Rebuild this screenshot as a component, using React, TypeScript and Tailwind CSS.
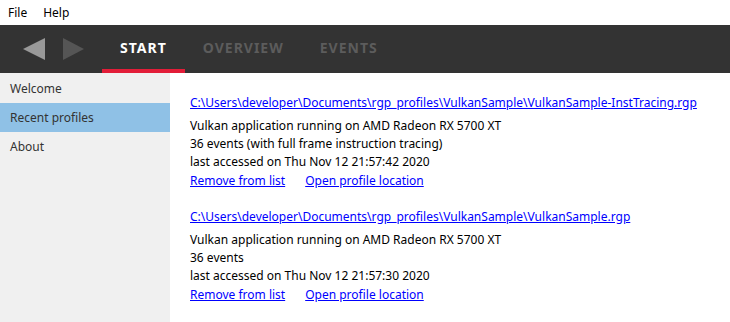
import React from "react";

const font = { fontFamily: '"Noto Sans", "Open Sans", sans-serif' };

type Profile = {
  path: string;
  device: string;
  events: string;
  accessed: string;
};

const profiles: Profile[] = [
  {
    path: "C:\\Users\\developer\\Documents\\rgp_profiles\\VulkanSample\\VulkanSample-InstTracing.rgp",
    device: "Vulkan application running on AMD Radeon RX 5700 XT",
    events: "36 events (with full frame instruction tracing)",
    accessed: "last accessed on Thu Nov 12 21:57:42 2020",
  },
  {
    path: "C:\\Users\\developer\\Documents\\rgp_profiles\\VulkanSample\\VulkanSample.rgp",
    device: "Vulkan application running on AMD Radeon RX 5700 XT",
    events: "36 events",
    accessed: "last accessed on Thu Nov 12 21:57:30 2020",
  },
];

// 최근 프로필 한 개
const ProfileEntry = ({ profile }: { profile: Profile }) => (
  <div className="flex flex-col mb-[17px]">
    <a className="text-[#0000ff] underline leading-[17px] mb-[6px] cursor-pointer">
      {profile.path}
    </a>
    <div className="text-black leading-[18px]">{profile.device}</div>
    <div className="text-black leading-[18px]">{profile.events}</div>
    <div className="text-black leading-[18px]">{profile.accessed}</div>
    <div className="flex gap-[20px] leading-[20px]">
      <a className="text-[#0000ff] underline cursor-pointer">Remove from list</a>
      <a className="text-[#0000ff] underline cursor-pointer">Open profile location</a>
    </div>
  </div>
);

export default function App() {
  const sideItems = ["Welcome", "Recent profiles", "About"];
  const tabs = ["START", "OVERVIEW", "EVENTS"];

  return (
    <div className="w-[730px] h-[322px] flex flex-col bg-white overflow-hidden text-[12px]" style={font}>
      {/* 메뉴 바 */}
      <div className="h-[25px] flex items-center gap-[16px] px-[8px] text-black">
        <span>File</span>
        <span>Help</span>
      </div>

      {/* 상단 탭 바 */}
      <div className="h-[48px] bg-[#333333] flex items-stretch">
        <div className="flex items-center gap-[18px] pl-[23px] w-[102px]">
          <svg width="22" height="22" viewBox="0 0 22 22">
            <polygon points="22,0 22,22 0,11" fill="#999999" />
          </svg>
          <svg width="21" height="22" viewBox="0 0 21 22">
            <polygon points="0,0 0,22 21,11" fill="#555555" />
          </svg>
        </div>
        {tabs.map((t, i) => (
          <div
            key={t}
            className={`flex items-center justify-center text-[14px] font-bold tracking-[1px] px-[18px] border-b-[4px] ${
              i === 0 ? "text-white border-[#e21d38]" : "text-[#5c5c5c] border-transparent"
            }`}
          >
            {t}
          </div>
        ))}
      </div>

      <div className="flex flex-1">
        {/* 사이드바 */}
        <div className="w-[170px] bg-[#f0f0f0] flex flex-col pt-[1px]">
          {sideItems.map((s) => (
            <div
              key={s}
              className={`h-[29px] flex items-center pl-[10px] text-[#333333] ${
                s === "Recent profiles" ? "bg-[#8fc1e6]" : ""
              }`}
            >
              {s}
            </div>
          ))}
        </div>

        {/* 본문 */}
        <div className="flex-1 pl-[20px] pt-[21px]">
          {profiles.map((p) => (
            <ProfileEntry key={p.path} profile={p} />
          ))}
        </div>
      </div>
    </div>
  );
}
